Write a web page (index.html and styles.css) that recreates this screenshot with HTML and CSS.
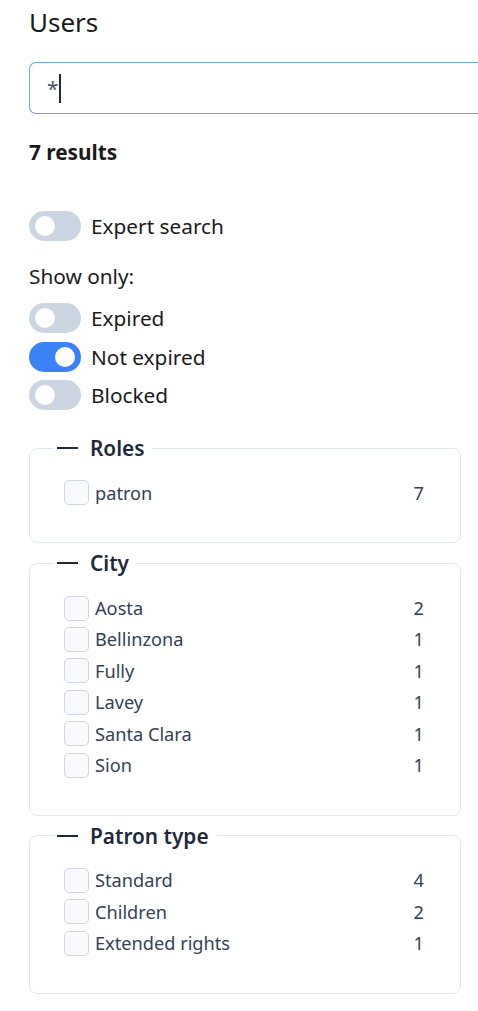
FILE: index.html
```html
<!DOCTYPE html>
<html lang="en">
<head>
    <meta charset="UTF-8">
    <meta name="viewport" content="width=device-width, initial-scale=1.0">
    <title>Users</title>
    <link rel="stylesheet" href="styles.css">
</head>
<body>
    <h1>Users</h1>

    <div class="search-box">
        <span class="search-value">*</span><span class="caret"></span>
    </div>

    <div class="result-count">7 results</div>

    <div class="toggle-row expert">
        <span class="toggle"></span>
        <span class="toggle-label">Expert search</span>
    </div>

    <div class="show-only">Show only:</div>

    <div class="toggle-list">
        <div class="toggle-row">
            <span class="toggle"></span>
            <span class="toggle-label">Expired</span>
        </div>
        <div class="toggle-row">
            <span class="toggle on"></span>
            <span class="toggle-label">Not expired</span>
        </div>
        <div class="toggle-row">
            <span class="toggle"></span>
            <span class="toggle-label">Blocked</span>
        </div>
    </div>

    <fieldset class="facet">
        <legend><span class="minus"></span>Roles</legend>
        <ul class="facet-items">
            <li class="facet-item"><span class="check"></span><span class="name">patron</span><span class="count">7</span></li>
        </ul>
    </fieldset>

    <fieldset class="facet">
        <legend><span class="minus"></span>City</legend>
        <ul class="facet-items">
            <li class="facet-item"><span class="check"></span><span class="name">Aosta</span><span class="count">2</span></li>
            <li class="facet-item"><span class="check"></span><span class="name">Bellinzona</span><span class="count">1</span></li>
            <li class="facet-item"><span class="check"></span><span class="name">Fully</span><span class="count">1</span></li>
            <li class="facet-item"><span class="check"></span><span class="name">Lavey</span><span class="count">1</span></li>
            <li class="facet-item"><span class="check"></span><span class="name">Santa Clara</span><span class="count">1</span></li>
            <li class="facet-item"><span class="check"></span><span class="name">Sion</span><span class="count">1</span></li>
        </ul>
    </fieldset>

    <fieldset class="facet">
        <legend><span class="minus"></span>Patron type</legend>
        <ul class="facet-items">
            <li class="facet-item"><span class="check"></span><span class="name">Standard</span><span class="count">4</span></li>
            <li class="facet-item"><span class="check"></span><span class="name">Children</span><span class="count">2</span></li>
            <li class="facet-item"><span class="check"></span><span class="name">Extended rights</span><span class="count">1</span></li>
        </ul>
    </fieldset>
</body>
</html>
```

FILE: styles.css
```css
html {
    overflow-x: hidden;
}

body {
    font-family: "Noto Sans", "Open Sans", sans-serif;
    font-size: 20.8px;
    color: #1a1a1a;
    margin: 0;
    padding: 6px 17px 20px 29px;
    background-color: #fff;
}

h1 {
    font-size: 26px;
    font-weight: 400;
    line-height: 32px;
    margin: 0;
}

/* the search field runs off the right edge of the window */
.search-box {
    display: flex;
    align-items: center;
    height: 52px;
    width: calc(100% + 17px);
    margin-top: 24px;
    padding-left: 17px;
    border: 1px solid #6ea2f3;
    border-right: none;
    border-radius: 7px 0 0 7px;
    box-sizing: border-box;
    color: #475569;
}

.caret {
    display: inline-block;
    width: 2px;
    height: 29px;
    margin-left: 1px;
    background-color: #1e293b;
}

.result-count {
    font-weight: 700;
    line-height: 28px;
    margin-top: 24px;
}

.toggle-row {
    display: flex;
    align-items: center;
    gap: 10px;
    height: 30px;
}

.toggle-row.expert {
    margin-top: 45px;
}

.toggle {
    position: relative;
    width: 52px;
    height: 30px;
    border-radius: 15px;
    background-color: #cbd5e1;
    flex-shrink: 0;
}

.toggle::after {
    content: "";
    position: absolute;
    top: 5px;
    left: 6px;
    width: 20px;
    height: 20px;
    border-radius: 50%;
    background-color: #fff;
}

.toggle.on {
    background-color: #3b82f6;
}

.toggle.on::after {
    left: 26px;
}

.show-only {
    line-height: 28px;
    margin-top: 21px;
}

.toggle-list {
    display: flex;
    flex-direction: column;
    gap: 8.5px;
    margin-top: 13px;
    margin-bottom: 24px;
}

.facet {
    border: 1px solid #e2e8f0;
    border-radius: 8px;
    margin: 0 0 6px;
    padding: 0 24px 34px;
}

.facet legend {
    display: flex;
    align-items: center;
    font-weight: 600;
    line-height: 28px;
    color: #1e293b;
    padding: 0 7px 0 3px;
}

.minus {
    display: inline-block;
    width: 21px;
    height: 2px;
    margin-right: 12px;
    background-color: #1e293b;
}

.facet-items {
    list-style: none;
    margin: 15px 0 0;
    padding: 0 11px 0 10px;
}

.facet-item {
    display: flex;
    align-items: center;
    height: 31.4px;
    font-size: 18.2px;
    color: #334155;
}

.check {
    width: 25px;
    height: 25px;
    border: 1px solid #cdd6e2;
    border-radius: 5px;
    background-color: #f8fafc;
    box-sizing: border-box;
    margin-right: 6px;
    flex-shrink: 0;
}

.name {
    flex: 1;
}

.count {
    width: 20px;
    text-align: right;
    margin-right: 1px;
}
```
